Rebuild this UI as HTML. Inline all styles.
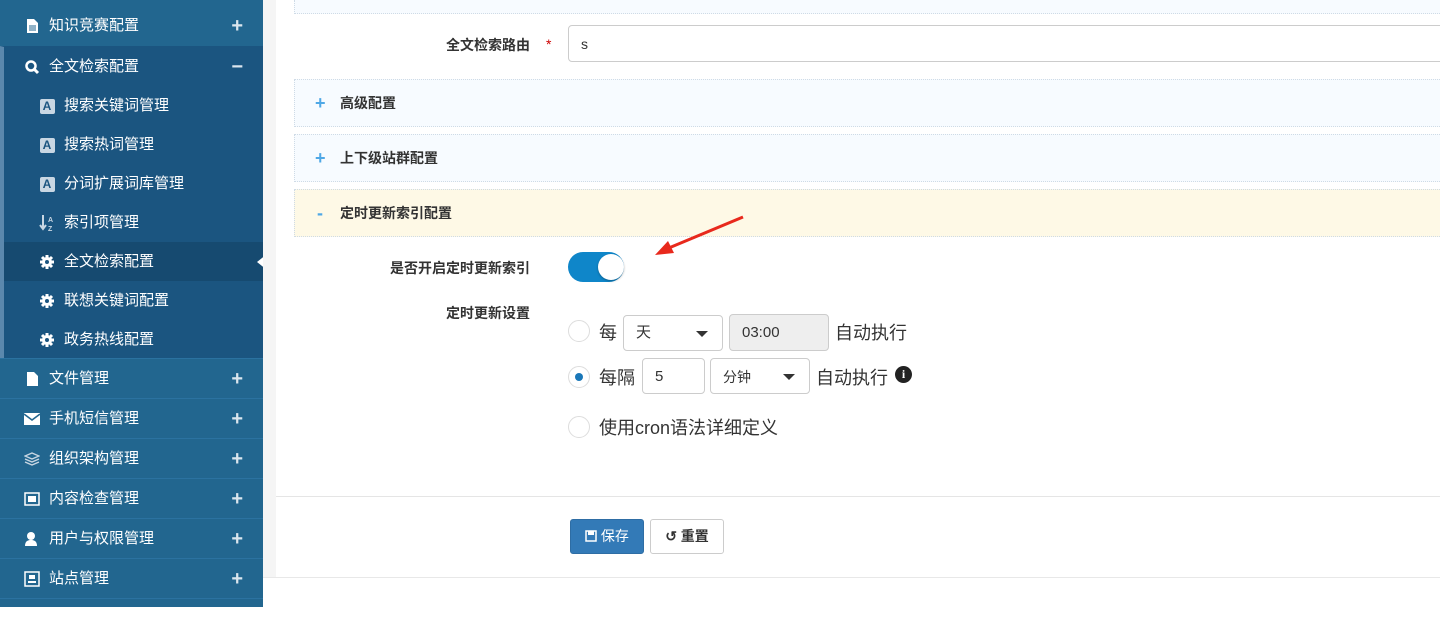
<!DOCTYPE html>
<html><head><meta charset="utf-8"><style>
*{box-sizing:border-box;margin:0;padding:0}
body{width:1440px;height:607px;overflow:hidden;background:#fff;font-family:"Liberation Sans","Noto Sans CJK SC",sans-serif;position:relative}
.sb{position:absolute;left:0;top:0;width:263px;height:607px;background:#22668f}
.it{position:absolute;left:0;width:263px;height:40px;color:#fff;font-size:15px;line-height:40px;border-top:1px solid #2b72a0}
.it .ic{position:absolute;left:24px;top:0;width:16px;text-align:center}
.it .ic svg{vertical-align:middle}
.it .t{position:absolute;left:49px}
.it .pl{position:absolute;right:20px;font-size:20px;font-weight:bold;color:#dbe6ee}
.sub{position:absolute;left:0;top:86px;width:263px;height:272px;background:#1b5580;border-left:4px solid #5b88ad}
.si{position:absolute;left:0;width:259px;height:39px;line-height:39px;color:#fff;font-size:15px}
.si .ic{position:absolute;left:35px;width:16px;text-align:center}
.si .ic svg{vertical-align:middle}
.si .t{position:absolute;left:60px}
.badge{display:inline-block;width:15px;height:15px;background:#c9d7e3;color:#1b5580;font-size:12px;font-weight:bold;line-height:15px;border-radius:2px;text-align:center;vertical-align:middle}
.gap{position:absolute;left:263px;top:0;width:13px;height:577px;background:#f5f5f5}
.bl{position:absolute;left:263px;top:577px;width:1177px;height:1px;background:#e8e8e8}
.lbl{position:absolute;font-size:14px;font-weight:bold;color:#333;text-align:right}
.acc{position:absolute;left:294px;width:1146px;height:48px;border:1px dotted #cfdbe6;border-right:none;background:#f7fbff;font-size:14px;font-weight:bold;color:#333;line-height:46px}
.acc .s{position:absolute;left:20px;color:#4fa8e6;font-size:18px;font-weight:bold}
.acc .t{position:absolute;left:45px}
.inp{position:absolute;border:1px solid #ccc;border-radius:4px;background:#fff;font-size:14px;color:#333;padding-left:12px}
.radio{position:absolute;left:568px;width:22px;height:22px;border:1px solid #ddd;border-radius:50%;background:#fff}
.txt{position:absolute;font-size:18px;color:#333}
.caret{position:absolute;right:14px;top:15px;border-left:6px solid transparent;border-right:6px solid transparent;border-top:6px solid #333}
</style></head><body>
<svg width="0" height="0" style="position:absolute"><defs>
<g id="gear"><circle cx="8" cy="8" r="5" fill="#fff"/><g stroke="#fff" stroke-width="3"><line x1="8" y1="1" x2="8" y2="15"/><line x1="1" y1="8" x2="15" y2="8"/><line x1="3" y1="3" x2="13" y2="13"/><line x1="13" y1="3" x2="3" y2="13"/></g><circle cx="8" cy="8" r="2" fill="#1b5580"/></g>
<g id="doc"><path d="M3 1h7l4 4v10H3z" fill="#fff"/><path d="M5 8h7M5 10h7M5 12h7" stroke="#22668f" stroke-width="1"/></g>
</defs></svg>
<div class="sb">
 <div class="it" style="top:6px;border-top:none"><span class="ic"><svg width="16" height="16"><use href="#doc"/></svg></span><span class="t">知识竞赛配置</span><span class="pl">+</span></div>
 <div class="it" style="top:46px;background:#1b5580;border-top:1px solid #1b5580;border-left:4px solid #5b88ad"><span class="ic" style="left:20px"><svg width="16" height="16"><circle cx="7" cy="7" r="4.5" fill="none" stroke="#fff" stroke-width="2.5"/><line x1="10" y1="10" x2="14" y2="14" stroke="#fff" stroke-width="3"/></svg></span><span class="t" style="left:45px">全文检索配置</span><span class="pl" style="right:20px">−</span></div>
 <div class="sub">
  <div class="si" style="top:0"><span class="ic"><span class="badge">A</span></span><span class="t">搜索关键词管理</span></div>
  <div class="si" style="top:39px"><span class="ic"><span class="badge">A</span></span><span class="t">搜索热词管理</span></div>
  <div class="si" style="top:78px"><span class="ic"><span class="badge">A</span></span><span class="t">分词扩展词库管理</span></div>
  <div class="si" style="top:117px"><span class="ic"><svg width="16" height="18"><path d="M4 1v13M1 11l3 4 3-4" stroke="#c9d7e3" stroke-width="2" fill="none"/><text x="9" y="8" font-size="7" fill="#c9d7e3" font-family="Liberation Sans" font-weight="bold">A</text><text x="9" y="17" font-size="7" fill="#c9d7e3" font-family="Liberation Sans" font-weight="bold">Z</text></svg></span><span class="t">索引项管理</span></div>
  <div class="si" style="top:156px;background:#164a70"><span class="ic"><svg width="16" height="16"><use href="#gear"/></svg></span><span class="t">全文检索配置</span><span style="position:absolute;right:-4px;top:12px;border-top:8px solid transparent;border-bottom:8px solid transparent;border-right:10px solid #fff"></span></div>
  <div class="si" style="top:195px"><span class="ic"><svg width="16" height="16"><use href="#gear"/></svg></span><span class="t">联想关键词配置</span></div>
  <div class="si" style="top:234px"><span class="ic"><svg width="16" height="16"><use href="#gear"/></svg></span><span class="t">政务热线配置</span></div>
 </div>
 <div class="it" style="top:358px"><span class="ic"><svg width="16" height="16"><path d="M3 1h7l4 4v10H3z" fill="#fff"/></svg></span><span class="t">文件管理</span><span class="pl">+</span></div>
 <div class="it" style="top:398px"><span class="ic"><svg width="16" height="12"><rect x="0" y="0" width="16" height="12" fill="#fff"/><path d="M0 1l8 6 8-6" stroke="#22668f" stroke-width="1.5" fill="none"/></svg></span><span class="t">手机短信管理</span><span class="pl">+</span></div>
 <div class="it" style="top:438px"><span class="ic"><svg width="16" height="14"><path d="M8 1l7 3-7 3-7-3z M1 7l7 3 7-3 M1 10l7 3 7-3" stroke="#c9d7e3" stroke-width="1.3" fill="none"/></svg></span><span class="t">组织架构管理</span><span class="pl">+</span></div>
 <div class="it" style="top:478px"><span class="ic"><svg width="16" height="16"><rect x="1" y="2" width="14" height="12" fill="none" stroke="#fff" stroke-width="1.5"/><rect x="4" y="5" width="8" height="6" fill="#fff"/></svg></span><span class="t">内容检查管理</span><span class="pl">+</span></div>
 <div class="it" style="top:518px"><span class="ic"><svg width="16" height="16"><circle cx="7" cy="5" r="4" fill="#fff"/><path d="M1 15c0-5 3-6 6-6s6 1 6 6z" fill="#fff"/></svg></span><span class="t">用户与权限管理</span><span class="pl">+</span></div>
 <div class="it" style="top:558px"><span class="ic"><svg width="16" height="16"><rect x="1" y="1" width="14" height="14" fill="none" stroke="#fff" stroke-width="1.5"/><rect x="5" y="4" width="6" height="4" fill="#fff"/><rect x="4" y="10" width="8" height="2" fill="#fff"/></svg></span><span class="t">站点管理</span><span class="pl">+</span></div>
 <div class="it" style="top:598px"></div>
</div>
<div class="gap"></div>
<div class="bl"></div>
<div style="position:absolute;left:294px;top:0;width:1146px;height:14px;background:#f7fbff;border-bottom:1px dotted #cfdbe6;border-left:1px dotted #cfdbe6"></div>
<div class="lbl" style="left:380px;width:150px;top:35px">全文检索路由</div>
<div style="position:absolute;left:546px;top:36px;color:#c00;font-size:14px">*</div>
<div class="inp" style="left:568px;top:25px;width:880px;height:37px;line-height:37px">s</div>
<div class="acc" style="top:79px"><span class="s">+</span><span class="t">高级配置</span></div>
<div class="acc" style="top:134px"><span class="s">+</span><span class="t">上下级站群配置</span></div>
<div class="acc" style="top:189px;background:#fef9e6"><span class="s" style="left:22px">-</span><span class="t">定时更新索引配置</span></div>
<div class="lbl" style="left:330px;width:200px;top:258px">是否开启定时更新索引</div>
<div style="position:absolute;left:568px;top:252px;width:56px;height:30px;border-radius:15px;background:#0f86c9"></div>
<div style="position:absolute;left:598px;top:254px;width:26px;height:26px;border-radius:50%;background:#fff;box-shadow:0 1px 2px rgba(0,0,0,.3)"></div>
<svg style="position:absolute;left:650px;top:212px" width="100" height="50"><line x1="93" y1="5" x2="14" y2="38" stroke="#e8291c" stroke-width="3"/><polygon points="5,43 18,29 24,41" fill="#e8291c"/></svg>
<div class="lbl" style="left:380px;width:150px;top:303px">定时更新设置</div>
<div class="radio" style="top:320px"></div>
<div class="txt" style="left:599px;top:319px">每</div>
<div class="inp" style="left:623px;top:315px;width:100px;height:36px;line-height:34px;font-size:15px">天<span class="caret"></span></div>
<div class="inp" style="left:729px;top:314px;width:100px;height:37px;line-height:36px;background:#eee;font-size:15px">03:00</div>
<div class="txt" style="left:835px;top:319px">自动执行</div>
<div class="radio" style="top:366px"><div style="position:absolute;left:6px;top:6px;width:8px;height:8px;border-radius:50%;background:#1a77b8"></div></div>
<div class="txt" style="left:599px;top:364px">每隔</div>
<div class="inp" style="left:642px;top:358px;width:63px;height:36px;line-height:36px;font-size:15px">5</div>
<div class="inp" style="left:710px;top:358px;width:100px;height:36px;line-height:36px;font-size:14px">分钟<span class="caret"></span></div>
<div class="txt" style="left:816px;top:364px">自动执行</div>
<div style="position:absolute;left:895px;top:366px;width:17px;height:17px;border-radius:50%;background:#222;color:#fff;font-size:12px;font-weight:bold;text-align:center;line-height:17px;font-family:'Liberation Serif',serif">i</div>
<div class="radio" style="top:416px"></div>
<div class="txt" style="left:599px;top:414px">使用cron语法详细定义</div>
<div style="position:absolute;left:276px;top:496px;width:1164px;height:1px;background:#e5e5e5"></div>
<div style="position:absolute;left:570px;top:519px;width:74px;height:35px;background:#337ab7;border:1px solid #2e6da4;border-radius:3px;color:#fff;font-size:14px;line-height:33px;text-align:center"><svg width="12" height="12" style="vertical-align:-1px"><rect x="1" y="1" width="10" height="10" fill="none" stroke="#fff" stroke-width="1.5"/><rect x="3" y="1" width="6" height="4" fill="#fff"/></svg> 保存</div>
<div style="position:absolute;left:650px;top:519px;width:74px;height:35px;background:#fff;border:1px solid #ccc;border-radius:3px;color:#333;font-size:14px;line-height:33px;text-align:center;font-weight:bold">↺ 重置</div>
</body></html>
